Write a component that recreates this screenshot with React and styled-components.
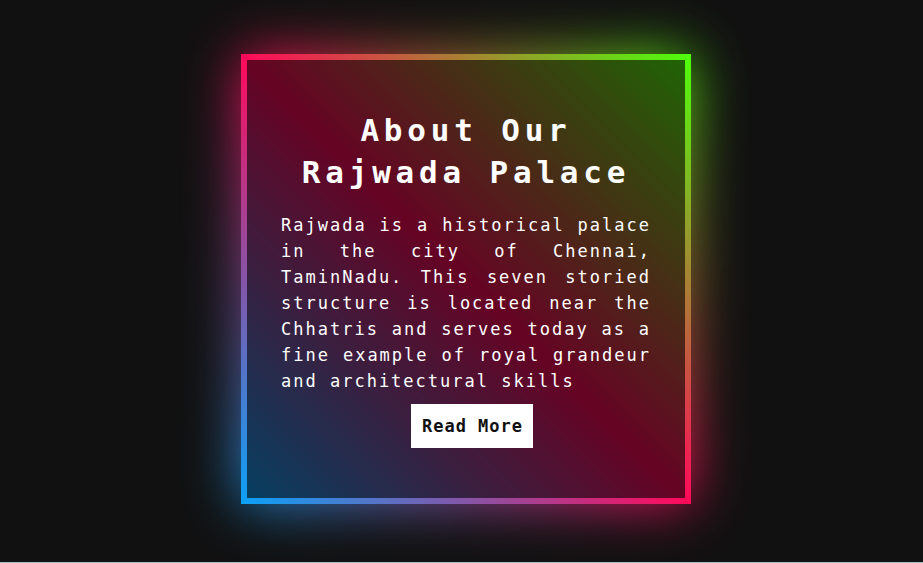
import React from 'react';
import styled, { createGlobalStyle } from 'styled-components';

const Global = createGlobalStyle`
  html { background: #a3c3c9; }
  body {
    margin: 0;
    background: #111111;
    height: calc(100vh - 1px);
    overflow: hidden;
    font-family: "DejaVu Sans Mono", "Liberation Mono", monospace;
  }
  #root { height: 100%; }
`;

const Page = styled.main`
  height: 100%;
  box-sizing: border-box;
  display: flex;
  align-items: center;
  justify-content: center;
  padding: 0 0 4px 9px;
`;

const gradient = 'linear-gradient(45deg, #0aa2f7 0%, #ff0a5a 50%, #4cff0a 100%)';

const Card = styled.section`
  position: relative;
  width: 450px;
  height: 450px;
  box-sizing: border-box;
  padding: 6px;
  display: flex;

  &::before,
  &::after {
    content: '';
    position: absolute;
    inset: 0;
    background: ${gradient};
  }
  &::before {
    filter: blur(28px);
    opacity: 0.9;
  }
`;

const Inner = styled.div`
  position: relative;
  z-index: 1;
  flex: 1;
  background: rgba(0, 0, 0, 0.6);
  display: flex;
  flex-direction: column;
  align-items: center;
  justify-content: center;
  padding: 0 34px 1px;
`;

const Title = styled.h2`
  margin: 0;
  color: #ffffff;
  font-size: 31px;
  font-weight: bold;
  line-height: 42px;
  letter-spacing: 4.8px;
  text-align: center;
`;

const Text = styled.p`
  margin: 19px 0 10px;
  color: #ffffff;
  font-size: 17px;
  line-height: 26px;
  letter-spacing: 2px;
  text-align: justify;
  align-self: stretch;
`;

const Button = styled.a`
  display: inline-block;
  margin-left: 12px;
  background: #ffffff;
  color: #111111;
  font-size: 17px;
  font-weight: bold;
  line-height: 24px;
  letter-spacing: 1px;
  padding: 10px 10px 10px 11px;
  text-decoration: none;
`;

export default function App() {
  return (
    <>
      <Global />
      <Page>
        <Card>
          <Inner>
            <Title>
              About Our
              <br />
              Rajwada Palace
            </Title>
            <Text>
              Rajwada is a historical palace in the city of Chennai, TaminNadu. This seven storied
              structure is located near the Chhatris and serves today as a fine example of royal
              grandeur and architectural skills
            </Text>
            <Button href="#">Read More</Button>
          </Inner>
        </Card>
      </Page>
    </>
  );
}
